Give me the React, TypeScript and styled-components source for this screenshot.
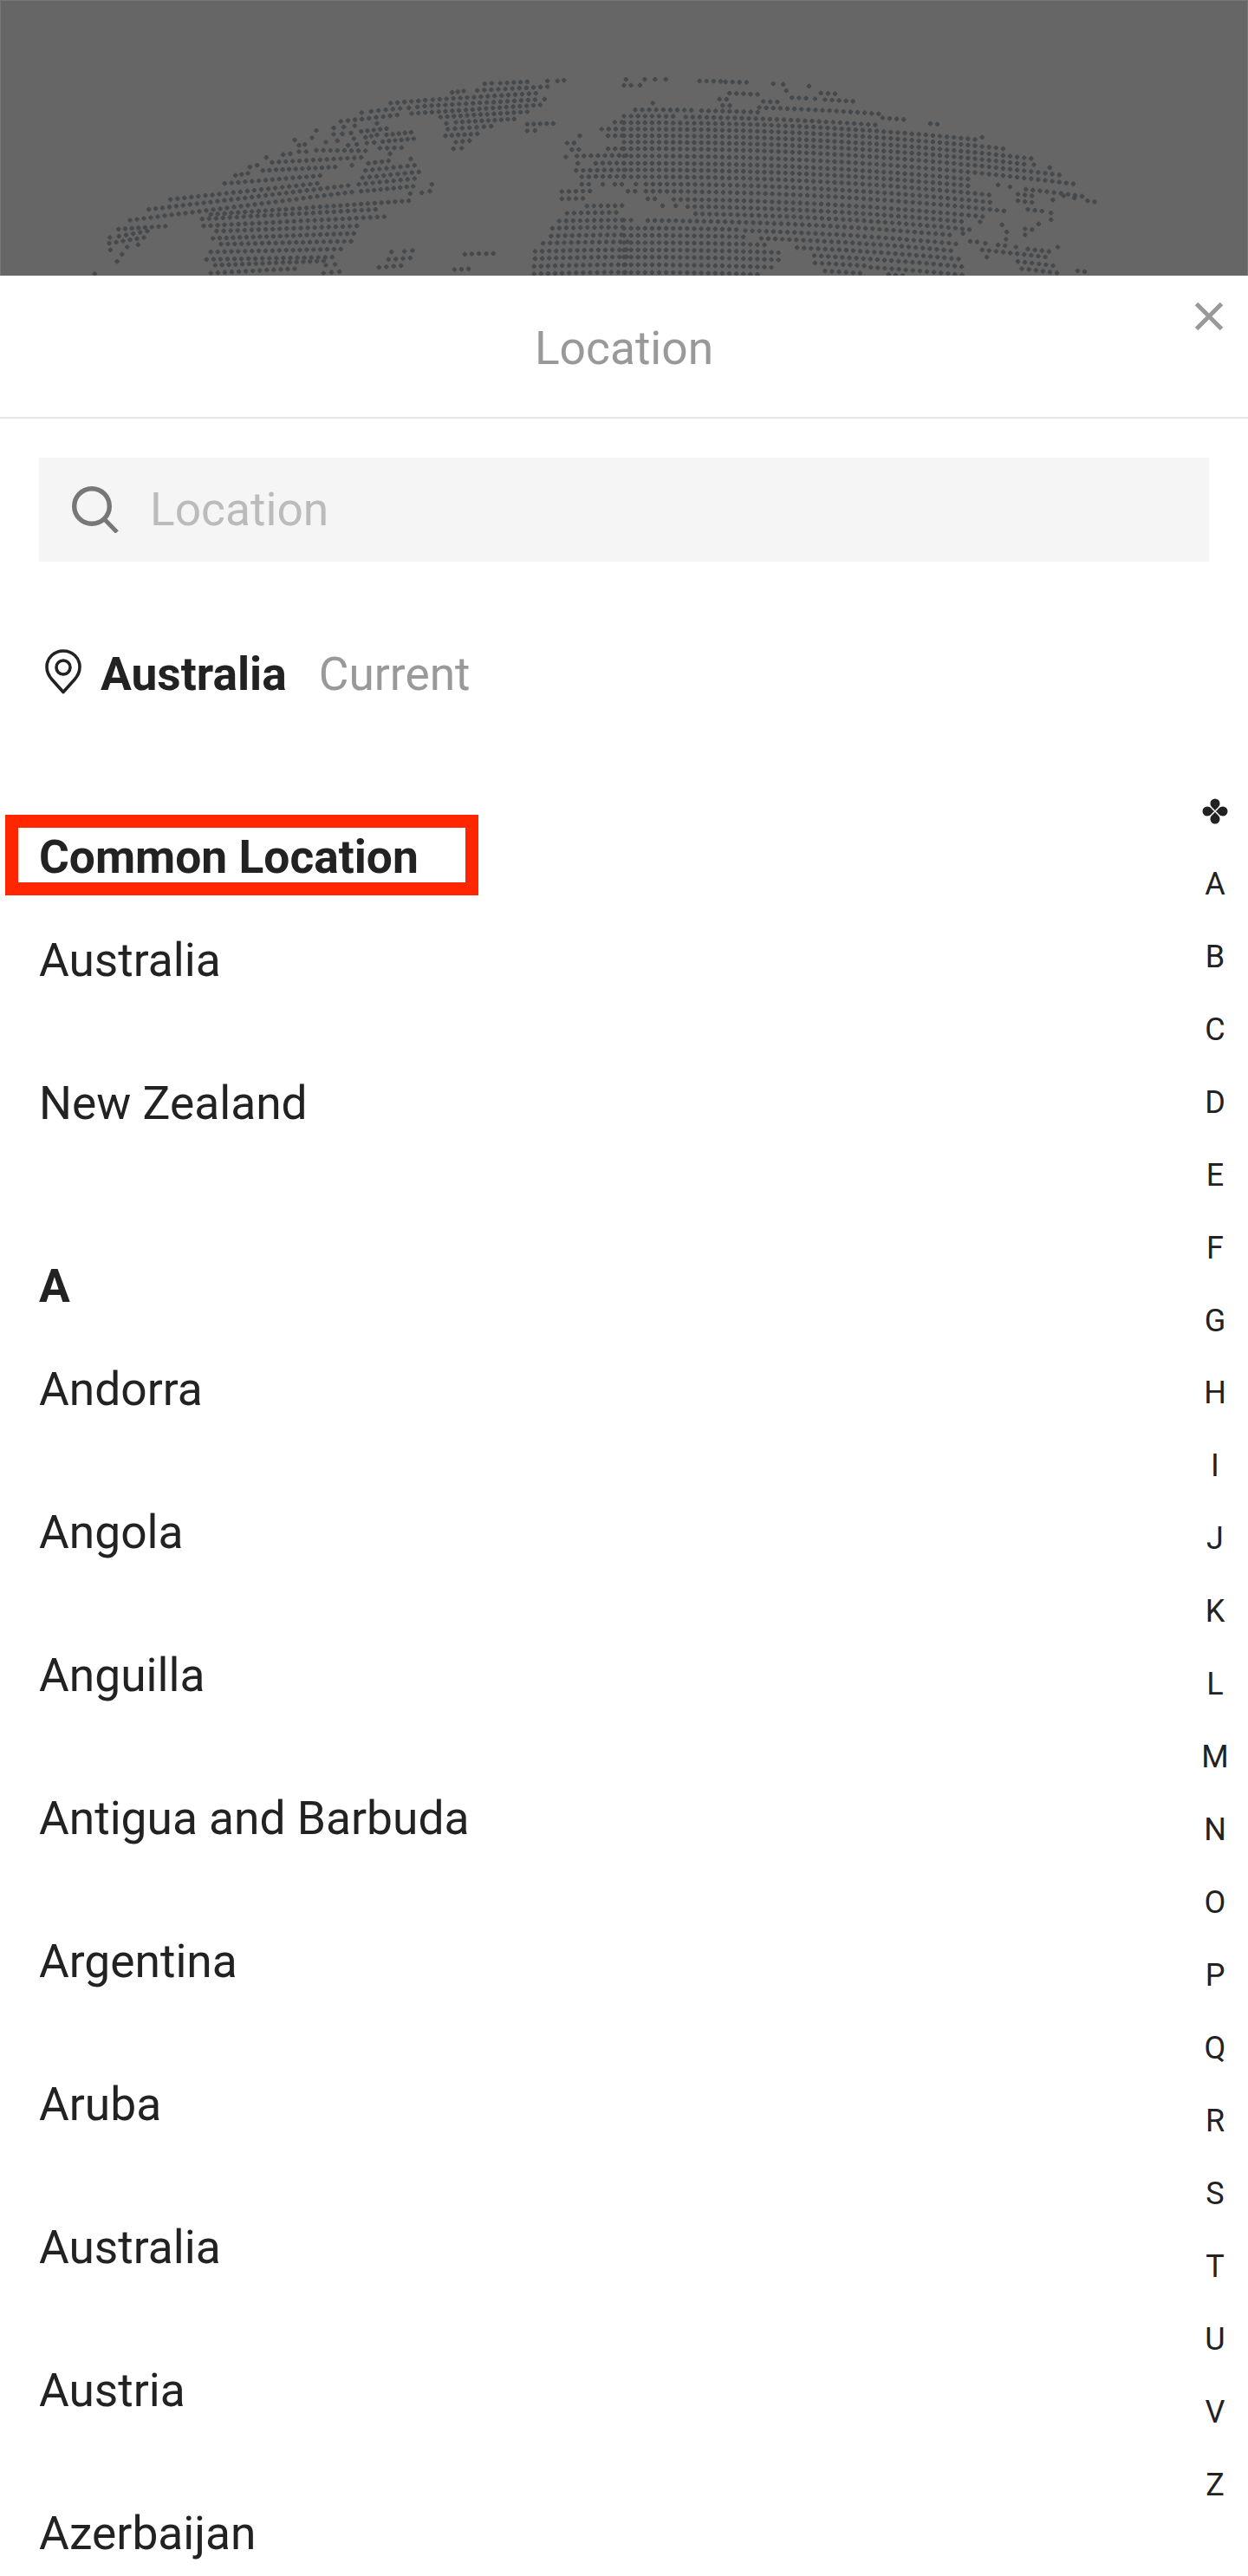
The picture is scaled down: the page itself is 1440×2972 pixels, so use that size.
import React from "react";
import styled, { createGlobalStyle } from "styled-components";

const Global = createGlobalStyle`
  html, body { margin: 0; padding: 0; background: #fff; }
  body { font-family: Roboto, "Liberation Sans", sans-serif; color: #222; }
`;

/* Dot-map segments: [x0, y0, x1, y1] or [x, y] in 3x units, per picture area. */
const AMERICA_S: number[][] = [
  [642,52,950,35],[610,80,860,68],[515,97,558,90],[478,125,808,98],[290,180,798,125],[215,215,905,132],[150,252,918,155],
  [430,232,1115,185],[400,248,1000,215],[405,272,1030,240],[450,290,935,272],[437,315,925,298],[465,335,915,325],
  [430,362,880,352],[415,388,850,380],[445,408,820,393],[828,408,860,405],[430,435,720,420],[820,435,875,430],[490,445,640,445],
  [110,283,272,273],[112,308,210,290],[78,332,198,312],[80,312],[82,355],[140,345],[178,337],[122,370],[105,395],[28,438],[50,447,95,445],
  [975,55,1045,47],[965,80,1135,62],[955,105,1150,85],[942,128,1135,108],[950,152,1130,135],[1120,160],[1160,157,1188,152],[1195,128],
  [1122,40],[1050,22],[918,62],[622,35],[565,68,590,62],[680,25,705,22],[735,15,760,15],[795,10,965,12],[1015,3,1090,1],
  [1055,362],[1100,360,1128,357],[1045,388,1120,383],[1012,415,1088,410],
];
const AMERICA_N: number[][] = [
  [658,35,682,33],[712,33,805,28],[875,25],[910,25,932,23],[545,65,585,60],[632,58,875,45],[332,102,452,92],[478,90,835,68],
  [395,118,425,115],[450,112,832,90],[865,88],[405,138,850,108],[505,150,805,132],[525,172],[558,168,760,157],[530,192,680,182],
  [522,215,632,208],[558,237,605,232],[550,260,578,258],[805,175,895,172],[805,198,832,197],[232,135],[265,130,365,120],[160,165,355,143],
  [135,188],[170,185],[208,180],[285,172],[230,200,318,190],[75,197],[60,222],[135,210,165,208],[205,225],[195,205],[245,220,285,212],
  [318,212,403,203],[305,235,412,225],[0,230],[15,248,35,245],[108,237],[148,232],[185,248,215,245],[250,240,275,238],
];
/* Old-world rows: [x0, y0, x1], x in units of 2.178, y in units of 3; they follow the globe's curve. */
const L: number[][] = [
  [1168,880,1195],[1222,878,1248],[1142,933,1170],
  [1545,423,1568],[1512,447,1568],[1528,470,1568],[1457,470,1457],[1425,495,1445],[1437,518,1460],[1528,515,1568],
  [1422,543,1422],[1450,540,1568],[1452,565,1452],[1497,565,1568],[1448,590,1568],[1462,612,1568],[1462,638,1485],
  [1515,638,1515],[1545,638,1568],[1412,663,1488],[1412,688,1470],[1475,713,1555],[1425,738,1555],[1405,765,1568],
  [1388,790,1568],[1385,817,1568],[1365,842,1568],[1345,870,1568],[1345,895,1568],[1342,922,1568],[1342,948,1568],
];
const R: number[][] = [
  [5,275,5],[52,275,52],[78,275,78],[105,275,105],[0,295,20],[40,295,40],[190,280,240],[255,283,315],[375,290,375],[400,292,400],
  [465,298,465],[408,314,408],[265,323,298],[318,326,340],[495,322,528],[240,343,265],[350,351,385],[422,338,458],[480,342,480],[505,345,575],
  [72,357,72],[248,365,270],[28,380,175],[195,383,340],[340,372,635],[0,402,125],[155,405,632],[650,408,700],[770,428,790],
  [0,425,880],[900,475,900],[0,447,945],[0,470,1025],[0,492,1005],[1030,570,1030],[1070,580,1070],[0,515,1100],[0,540,1135],
  [0,565,865],[940,640,940],[970,647,970],[1010,655,1150],[0,588,860],[0,612,915],[30,637,30],[55,637,925],
  [990,672,1030],[1105,678,1105],[1132,685,1132],[1165,695,1175],[1078,692,1078],[10,662,32],[55,662,950],[60,688,85],[125,690,905],
  [990,695,1025],[1015,725,1050],[1073,737,1073],[97,712,97],[130,712,130],[160,715,855],[1073,760,1073],[895,768,895],
  [180,740,860],[950,778,950],[1042,775,1042],[1008,792,1030],[0,762,20],[60,763,125],[148,765,810],[962,803,962],[852,808,852],[1008,813,1008],
  [0,790,280],[305,798,835],[870,835,885],[960,828,960],[908,842,908],[940,848,960],[985,855,985],[1015,862,1065],[1090,855,1090],
  [0,815,300],[345,825,830],[900,865,1060],[912,890,912],[0,840,358],[435,857,840],[990,905,1070],
  [0,865,380],[478,885,850],[1000,930,1080],[1140,937,1160],[0,890,385],[480,910,595],[620,925,858],
  [0,917,372],[505,938,585],[665,950,815],[860,955,910],[1010,955,1010],[1035,960,1080],[1135,958,1180],[0,943,338],
];

const CX = 740;
const K = 0.00013;
const PITCH = 8.1;

function plus(x: number, y: number): string {
  if (y > 318) return "";
  return `M${(x - 2.6).toFixed(1)} ${y.toFixed(1)}h5.2M${x.toFixed(1)} ${(y - 2.6).toFixed(1)}v5.2`;
}

function segments(parts: number[][], ox: number, oy: number): string {
  let d = "";
  for (const p of parts) {
    const x0 = ox + p[0] / 3;
    const y0 = oy + p[1] / 3;
    if (p.length === 2) {
      d += plus(x0, y0);
      continue;
    }
    const x1 = ox + p[2] / 3;
    const y1 = oy + p[3] / 3;
    const n = Math.max(1, Math.round((x1 - x0) / 7.9));
    for (let i = 0; i <= n; i++) {
      d += plus(x0 + ((x1 - x0) * i) / n, y0 + ((y1 - y0) * i) / n);
    }
  }
  return d;
}

function curved(runs: number[][], offset: number): string {
  let d = "";
  for (const [zx0, zy0, zx1] of runs) {
    const x0 = offset + zx0 / 2.178;
    const x1 = offset + zx1 / 2.178;
    const y0 = zy0 / 3;
    const n = Math.max(0, Math.round((x1 - x0) / PITCH));
    for (let i = 0; i <= n; i++) {
      const x = x0 + i * PITCH;
      d += plus(x, y0 + K * ((x - CX) ** 2 - (x0 - CX) ** 2));
    }
  }
  return d;
}

const MAP_PATH =
  segments(AMERICA_S, 100, 170) + segments(AMERICA_N, 340, 85) + curved(L, 0) + curved(R, 720);

const Page = styled.div`
  position: relative;
  width: 1440px;
  height: 2972px;
  overflow: hidden;
  background: #fff;
`;

const Backdrop = styled.div`
  height: 318px;
  background: #666;
  box-shadow: inset 1px 1px 0 #777, inset -1px 0 0 #777;
`;

const MapDrawing = styled.svg`
  display: block;
  width: 1440px;
  height: 318px;
`;

const ModalHeader = styled.header`
  position: relative;
  height: 158px;
  padding-top: 5px;
  display: flex;
  align-items: center;
  justify-content: center;
  border-bottom: 2px solid #e6e6e6;
`;

const Title = styled.h1`
  margin: 0;
  font-size: 53.3px;
  font-weight: 400;
  color: #999;
`;

const CloseIcon = styled.svg`
  position: absolute;
  right: 28px;
  top: 30px;
  width: 34px;
  height: 34px;
`;

const Body = styled.main`
  padding: 45px 0 0 45px;
`;

const SearchBox = styled.div`
  width: 1350px;
  height: 120px;
  background: #f5f5f5;
  display: flex;
  align-items: center;
  padding-left: 38px;
  box-sizing: border-box;
`;

const SearchIcon = styled.svg`
  width: 54px;
  height: 54px;
  flex: none;
`;

const Placeholder = styled.span`
  font-size: 53.3px;
  color: #bbb;
  margin-left: 36px;
`;

const CurrentRow = styled.div`
  height: 72px;
  margin-top: 94px;
  display: flex;
  align-items: center;
`;

const PinIcon = styled.svg`
  width: 42px;
  height: 52px;
  flex: none;
  margin: -6px 22px 0 7px;
`;

const CurrentName = styled.strong`
  font-size: 53.3px;
  font-weight: 700;
  color: #222;
`;

const CurrentTag = styled.span`
  font-size: 53.3px;
  color: #999;
  margin-left: 37px;
`;

const Section = styled.section<{ $gap: number }>`
  margin-top: ${(p) => p.$gap}px;
`;

const SectionTitle = styled.h2`
  position: relative;
  margin: 0;
  height: 72px;
  line-height: 72px;
  font-size: 53.3px;
  font-weight: 700;
  color: #222;
`;

const Annotation = styled.span`
  position: absolute;
  left: -39px;
  top: -13px;
  width: 546px;
  height: 93px;
  border: 15px solid #ff2600;
  box-sizing: border-box;
`;

const Row = styled.div`
  height: 165px;
  display: flex;
  align-items: center;
  font-size: 53.3px;
  color: #222;
`;

const IndexRail = styled.nav`
  position: absolute;
  top: 894px;
  right: 0;
  width: 76px;
  display: flex;
  flex-direction: column;
  align-items: center;
`;

const IndexItem = styled.span`
  height: 83.95px;
  display: flex;
  align-items: center;
  justify-content: center;
  font-size: 36px;
  color: #222;
`;

const CloverIcon = styled.svg`
  width: 30px;
  height: 30px;
`;

const PETAL = "M15 14.2C13.2 11.4 9.5 10 9.5 6a5.5 5.5 0 0 1 11 0C20.5 10 16.8 11.4 15 14.2Z";

const common = ["Australia", "New Zealand"];
const groupA = ["Andorra", "Angola", "Anguilla", "Antigua and Barbuda", "Argentina", "Aruba", "Australia", "Austria", "Azerbaijan"];
const letters = "ABCDEFGHIJKLMNOPQRSTUVZ".split("");

export default function App() {
  return (
    <Page>
      <Global />
      <Backdrop>
        <MapDrawing viewBox="0 0 1440 318">
          <path d={MAP_PATH} stroke="#46494c" strokeWidth="2.7" fill="none" />
        </MapDrawing>
      </Backdrop>
      <ModalHeader>
        <Title>Location</Title>
        <CloseIcon viewBox="0 0 34 34">
          <path d="M2.5 2.5 31.5 31.5M31.5 2.5 2.5 31.5" stroke="#999" strokeWidth="5" fill="none" />
        </CloseIcon>
      </ModalHeader>
      <Body>
        <SearchBox>
          <SearchIcon viewBox="0 0 54 54">
            <circle cx="23" cy="23" r="20.3" stroke="#777" strokeWidth="5.4" fill="none" />
            <path d="M37 37.5 52 53" stroke="#777" strokeWidth="5" fill="none" />
          </SearchIcon>
          <Placeholder>Location</Placeholder>
        </SearchBox>
        <CurrentRow>
          <PinIcon viewBox="0 0 42 52">
            <path d="M21 2C10.5 2 2 10 2 20.5c0 6 2.500 10.500 6 14.500L21 49.500 34 35c3.500-4 6-8.500 6-14.500C40 10 31.500 2 21 2Z" stroke="#222" strokeWidth="3.6" strokeLinejoin="round" fill="none" />
            <circle cx="21" cy="21" r="8" stroke="#222" strokeWidth="3.6" fill="none" />
          </PinIcon>
          <CurrentName>Australia</CurrentName>
          <CurrentTag>Current</CurrentTag>
        </CurrentRow>
        <Section $gap={139}>
          <SectionTitle>
            <Annotation />
            Common Location
          </SectionTitle>
          {common.map((c) => (
            <Row key={c}>{c}</Row>
          ))}
        </Section>
        <Section $gap={93}>
          <SectionTitle>A</SectionTitle>
          {groupA.map((c) => (
            <Row key={c}>{c}</Row>
          ))}
        </Section>
      </Body>
      <IndexRail>
        <IndexItem>
          <CloverIcon viewBox="0 0 30 30">
            <g fill="#222">
              <path d={PETAL} />
              <path d={PETAL} transform="rotate(90 15 15)" />
              <path d={PETAL} transform="rotate(180 15 15)" />
              <path d={PETAL} transform="rotate(270 15 15)" />
            </g>
          </CloverIcon>
        </IndexItem>
        {letters.map((l) => (
          <IndexItem key={l}>{l}</IndexItem>
        ))}
      </IndexRail>
    </Page>
  );
}
